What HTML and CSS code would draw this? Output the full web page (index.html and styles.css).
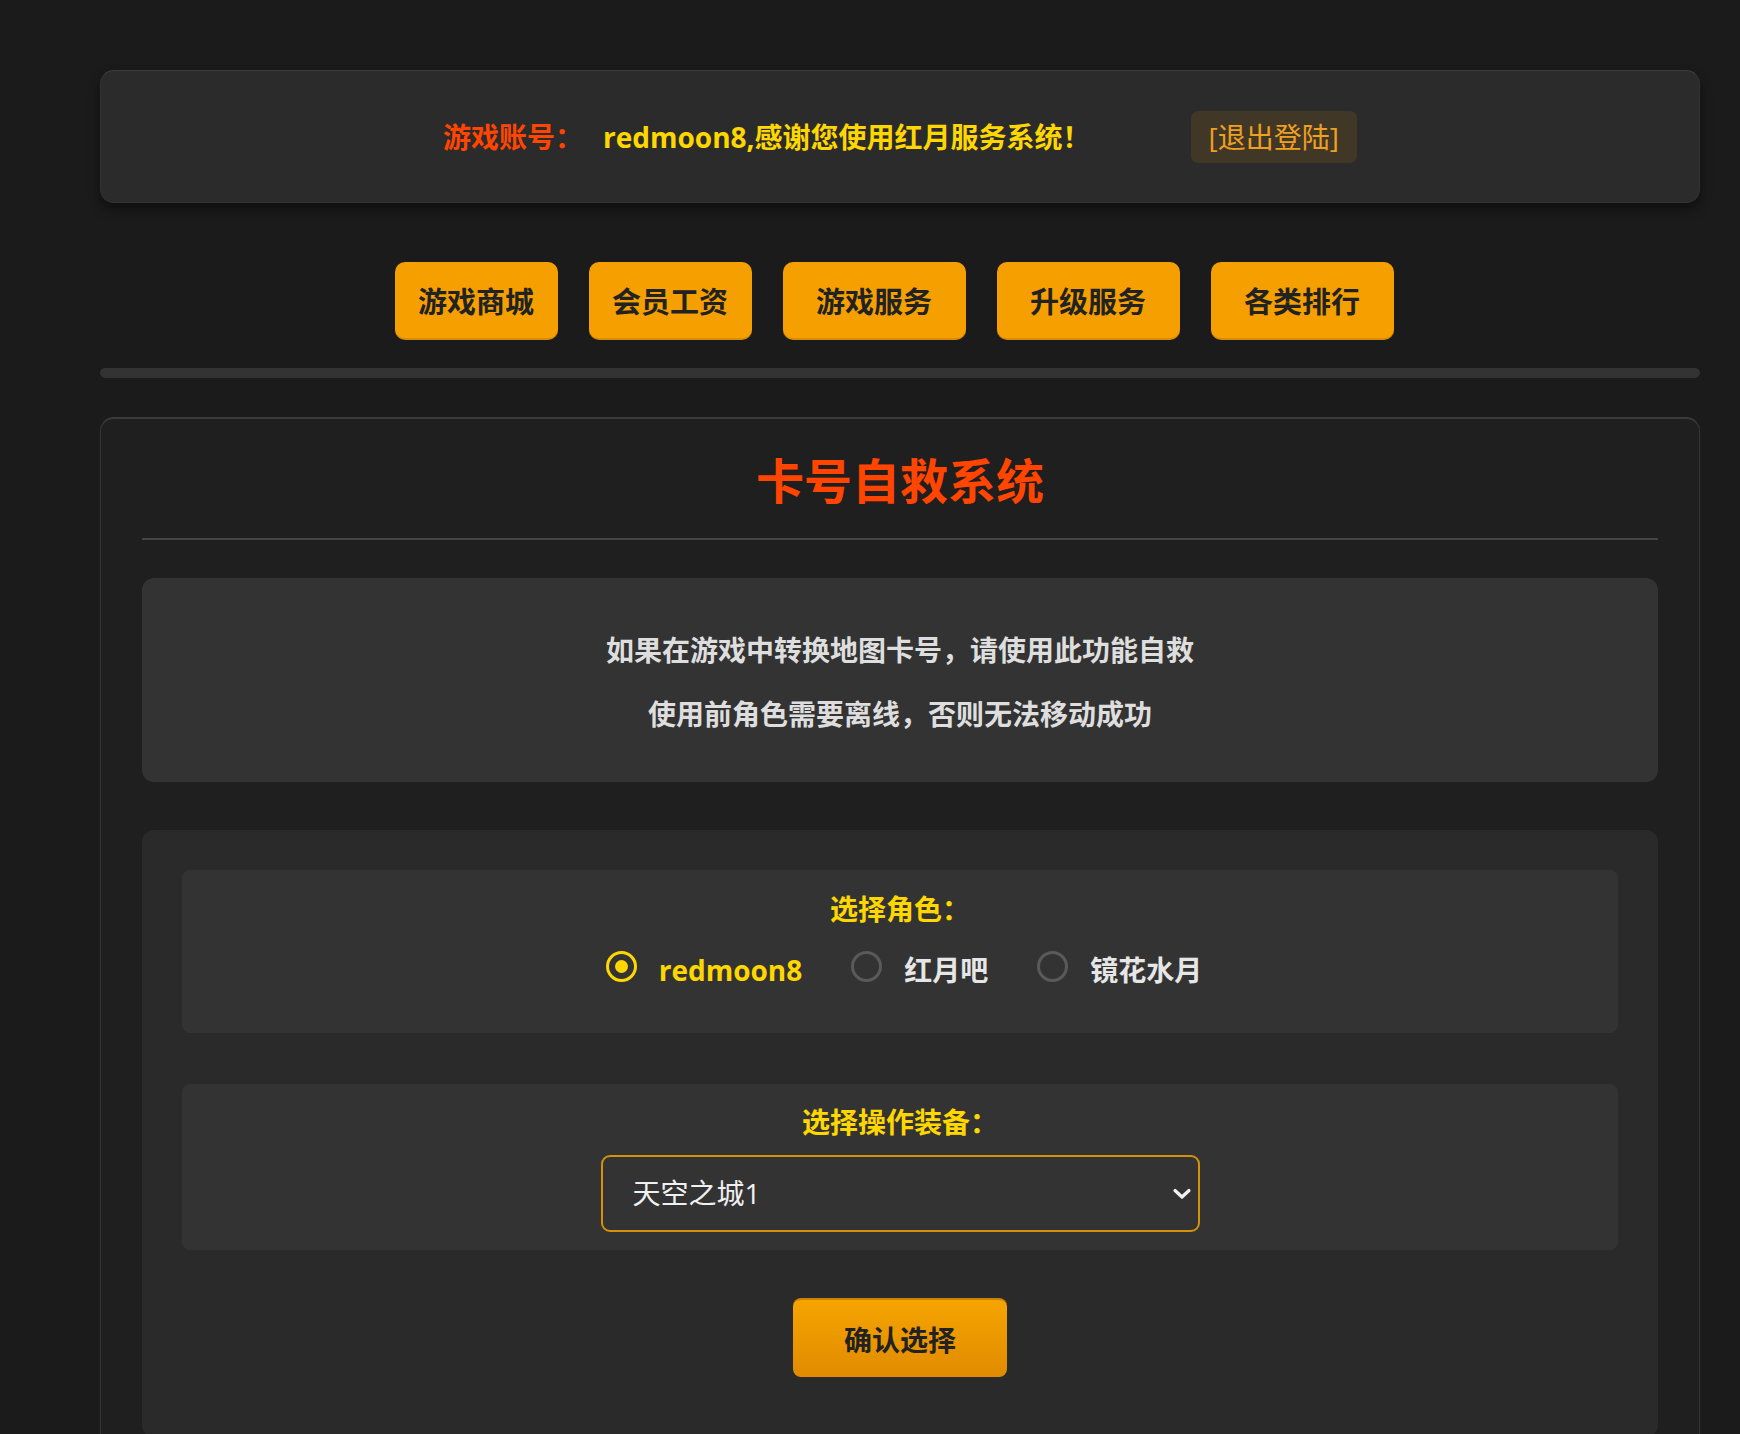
FILE: index.html
```html
<!DOCTYPE html>
<html lang="zh-CN">
<head>
<meta charset="utf-8">
<title>卡号自救系统</title>
<link rel="stylesheet" href="styles.css">
</head>
<body>
<div class="page">
  <header class="account-bar">
    <span class="account-label">游戏账号：</span>
    <span class="account-name">redmoon8,感谢您使用红月服务系统！</span>
    <a class="logout">[退出登陆]</a>
  </header>

  <nav class="nav">
    <a class="nav-btn nav-narrow">游戏商城</a>
    <a class="nav-btn nav-narrow">会员工资</a>
    <a class="nav-btn nav-wide">游戏服务</a>
    <a class="nav-btn nav-wide">升级服务</a>
    <a class="nav-btn nav-wide">各类排行</a>
  </nav>

  <div class="divider"></div>

  <main class="main-card">
    <h1 class="title">卡号自救系统</h1>
    <div class="title-rule"></div>

    <section class="info-box">
      <p class="info-line">如果在游戏中转换地图卡号，请使用此功能自救</p>
      <p class="info-line">使用前角色需要离线，否则无法移动成功</p>
    </section>

    <form class="form-area">
      <div class="field-box field-role">
        <div class="field-label">选择角色：</div>
        <div class="radio-row">
          <label class="radio-opt checked"><span class="radio-dot"></span><span class="radio-text">redmoon8</span></label>
          <label class="radio-opt"><span class="radio-dot"></span><span class="radio-text">红月吧</span></label>
          <label class="radio-opt"><span class="radio-dot"></span><span class="radio-text">镜花水月</span></label>
        </div>
      </div>

      <div class="field-box field-equip">
        <div class="field-label">选择操作装备：</div>
        <div class="select-wrap">
          <div class="select-box">天空之城1</div>
          <svg class="select-arrow" width="20" height="12" viewBox="0 0 20 12"><path d="M3 2.5 L10 9 L17 2.5" fill="none" stroke="#f2f2f2" stroke-width="3.2" stroke-linecap="round" stroke-linejoin="round"/></svg>
        </div>
      </div>

      <div class="submit-row">
        <button type="button" class="submit-btn">确认选择</button>
      </div>
    </form>
  </main>
</div>
</body>
</html>
```

FILE: styles.css
```css
* { box-sizing: border-box; }

html, body {
  margin: 0;
  padding: 0;
  background: #1b1b1b;
  font-family: "Open Sans", "Noto Sans CJK SC", sans-serif;
  color: #e0e0e0;
}

.page {
  width: 1600px;
  margin-left: 100px;
  padding-top: 70px;
}

/* account bar */
.account-bar {
  height: 133px;
  background: #2b2b2b;
  border: 1px solid #333;
  border-top-color: #3c3c3c;
  border-radius: 14px;
  box-shadow: 0 6px 12px rgba(0, 0, 0, 0.45);
  display: flex;
  align-items: center;
  justify-content: center;
  font-weight: bold;
  font-size: 28px;
  line-height: 40px;
}

.account-label {
  color: #ff4500;
  margin-right: 20px;
}

.account-name {
  color: #ffd700;
}

.logout {
  margin-left: 100px;
  height: 52px;
  line-height: 52px;
  padding: 0 18px;
  border-radius: 7px;
  background: rgba(255, 165, 0, 0.1);
  color: #f0a020;
  font-weight: normal;
  font-size: 28px;
}

/* nav */
.nav {
  margin-top: 59px;
  display: flex;
  justify-content: center;
  gap: 31px;
  padding-right: 12px;
}

.nav-btn {
  height: 78px;
  padding-top: 4px;
  line-height: 72px;
  background: #f5a000;
  border-bottom: 2px solid #d88c00;
  border-radius: 10px;
  color: #222;
  font-weight: bold;
  font-size: 29px;
  text-align: center;
}

.nav-narrow { width: 163px; }
.nav-wide { width: 183px; }

.divider {
  margin-top: 28px;
  height: 10px;
  background: #333;
  border-radius: 5px;
}

/* main card */
.main-card {
  margin-top: 39px;
  background: #1f1f1f;
  border: 1px solid #353535;
  border-top: 2px solid #3a3a3a;
  border-radius: 14px 14px 0 0;
  padding: 33px 41px 60px;
}

.title {
  margin: 0;
  text-align: center;
  color: #ff4500;
  font-size: 48px;
  line-height: 58px;
  font-weight: bold;
}

.title-rule {
  margin-top: 28px;
  height: 2px;
  background: #444;
}

.info-box {
  margin-top: 38px;
  background: #333;
  border-radius: 12px;
  padding: 52px 20px 48px;
  display: flex;
  flex-direction: column;
  gap: 24px;
  align-items: center;
}

.info-line {
  margin: 0;
  font-size: 28px;
  line-height: 40px;
  font-weight: bold;
  color: #dedede;
}

/* form */
.form-area {
  margin-top: 48px;
  background: #2a2a2a;
  border-radius: 12px;
  padding: 40px 40px 60px;
  display: flex;
  flex-direction: column;
}

.field-box {
  background: #333;
  border-radius: 8px;
  display: flex;
  flex-direction: column;
  align-items: center;
}

.field-role {
  padding: 22px 20px 45px;
}

.field-equip {
  margin-top: 51px;
  padding: 21px 20px 18px;
}

.field-label {
  color: #ffd700;
  font-weight: bold;
  font-size: 28px;
  line-height: 34px;
}

.radio-row {
  margin-top: 22px;
  height: 40px;
  display: flex;
  align-items: center;
  gap: 49px;
  padding-left: 8px;
}

.radio-opt {
  display: flex;
  align-items: center;
  gap: 22px;
}

.radio-dot {
  width: 31px;
  height: 31px;
  border-radius: 50%;
  border: 3px solid #5a5a5a;
  display: flex;
  align-items: center;
  justify-content: center;
  margin-top: -4px;
}

.radio-opt.checked .radio-dot {
  border-color: #ffd700;
}

.radio-opt.checked .radio-dot::after {
  content: "";
  width: 13px;
  height: 13px;
  border-radius: 50%;
  background: #ffd700;
}

.radio-text {
  font-size: 28px;
  line-height: 40px;
  font-weight: bold;
  color: #e6e6e6;
  padding-top: 4px;
}

.radio-opt.checked .radio-text {
  color: #ffd700;
}

.select-wrap {
  margin-top: 16px;
  position: relative;
  width: 599px;
}

.select-box {
  height: 77px;
  border: 2px solid #d4920c;
  border-radius: 9px;
  background: #333;
  color: #f0f0f0;
  font-size: 28px;
  line-height: 73px;
  padding-left: 30px;
}

.select-arrow {
  position: absolute;
  right: 8px;
  top: 33px;
}

.submit-row {
  margin-top: 48px;
  display: flex;
  justify-content: center;
}

.submit-btn {
  width: 214px;
  height: 79px;
  border: none;
  border-top: 2px solid #c98400;
  border-radius: 8px;
  background: linear-gradient(#f6a400, #e08b00);
  color: #222;
  font-family: "Open Sans", "Noto Sans CJK SC", sans-serif;
  font-weight: bold;
  font-size: 28px;
  padding: 0;
}
```
